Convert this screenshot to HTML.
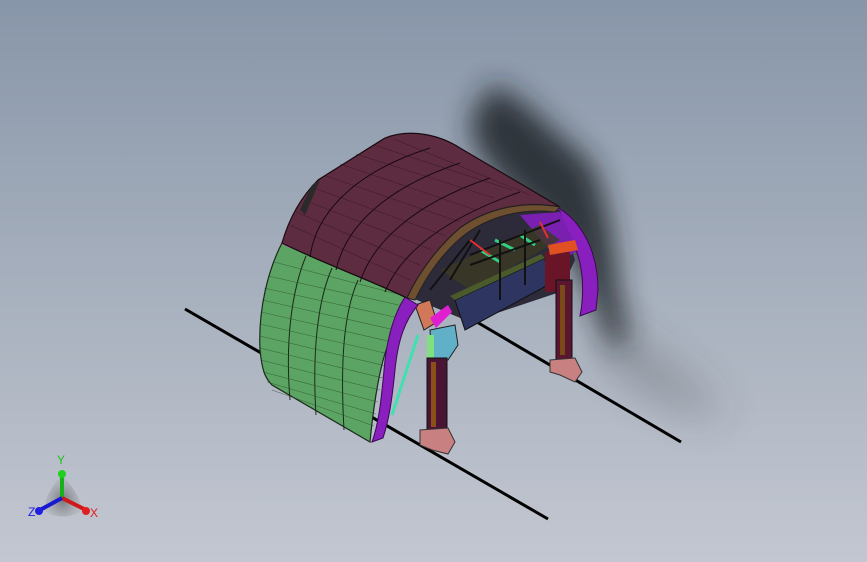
<!DOCTYPE html>
<html><head><meta charset="utf-8"><style>
html,body{margin:0;padding:0;width:867px;height:562px;overflow:hidden}
body{background:linear-gradient(180deg,#8896a9 0%,#a3adbb 45%,#c3c7d1 100%)}
svg{position:absolute;left:0;top:0}
</style></head><body>
<svg width="867" height="562" viewBox="0 0 867 562" font-family="Liberation Sans, sans-serif">
<defs>
<filter id="b" x="-50%" y="-50%" width="200%" height="200%"><feGaussianBlur stdDeviation="14"/></filter>
<filter id="b2" x="-50%" y="-50%" width="200%" height="200%"><feGaussianBlur stdDeviation="22"/></filter>
<radialGradient id="tg" cx="0.5" cy="0.6" r="0.5"><stop offset="0" stop-color="#444"/><stop offset="1" stop-color="#999" stop-opacity="0.4"/></radialGradient>
</defs>
<!-- shadow -->
<path d="M490 85 C520 90 560 140 590 160 C610 200 615 250 620 300 C630 330 630 345 615 350 C600 330 590 290 560 240 C520 200 470 160 470 120 Z" fill="#1e2126" opacity="0.85" filter="url(#b)"/>
<path d="M600 320 C650 360 700 390 725 415 C700 420 650 390 610 360 Z" fill="#333" opacity="0.4" filter="url(#b2)"/>
<!-- rails -->
<line x1="185" y1="309" x2="548" y2="519" stroke="#000" stroke-width="3"/>
<line x1="470" y1="318" x2="681" y2="442" stroke="#000" stroke-width="3"/>
<!-- right purple ring -->
<path d="M548 203 C580 215 598 250 598 290 L596 310 L580 316 C585 290 585 250 560 225 Z" fill="#8a1fc0" stroke="#3a0a50" stroke-width="1"/>
<!-- interior framework -->
<path d="M412 298 C430 260 460 230 500 215 C520 209 540 208 560 210 L575 260 L560 292 L470 322 Z" fill="#2d2a3a"/>
<path d="M520 215 L560 212 L578 250 L560 262 Z" fill="#7a20b0"/>
<path d="M440 270 L540 225 L560 240 L470 290 Z" fill="#3b3a22" opacity="0.8"/>
<path d="M455 300 L545 258 L548 285 L465 330 Z" fill="#2e3560" stroke="#111" stroke-width="1"/>
<path d="M455 300 L545 258 L541 254 L450 296 Z" fill="#4a5a2a"/>
<rect x="545" y="252" width="25" height="40" fill="#6a1428"/>
<path d="M548 245 L575 240 L578 250 L550 255 Z" fill="#e05020"/>
<path d="M480 250 L500 262 M495 240 L515 250 M520 235 L535 245" stroke="#2fd080" stroke-width="3"/>
<path d="M470 255 L560 220 M470 265 L540 240 M500 240 L500 300 M525 230 L525 285 M450 280 L480 230 M430 290 L470 240" stroke="#111" stroke-width="2"/>
<path d="M470 240 L490 255 M540 222 L548 238" stroke="#e03030" stroke-width="2"/>
<!-- right leg -->
<rect x="556" y="280" width="16" height="80" fill="#5a1530" stroke="#111" stroke-width="1"/>
<rect x="560" y="285" width="5" height="70" fill="#7a4a18"/>
<path d="M550 360 L575 358 L582 372 L575 382 L560 375 L550 372 Z" fill="#c88080" stroke="#333" stroke-width="1"/>
<!-- left leg + column -->
<path d="M430 330 L455 325 L458 345 L448 360 L432 360 Z" fill="#60b0c8" stroke="#222" stroke-width="1"/>
<rect x="427" y="335" width="7" height="25" fill="#80e080"/>
<rect x="427" y="358" width="20" height="72" fill="#4a1535" stroke="#111" stroke-width="1"/>
<rect x="431" y="362" width="5" height="65" fill="#8a5018"/>
<path d="M420 430 L448 428 L455 442 L448 454 L432 450 L420 445 Z" fill="#c88080" stroke="#333" stroke-width="1"/>
<path d="M415 305 L430 300 L437 322 L424 330 Z" fill="#d07858" stroke="#222" stroke-width="1"/>
<path d="M430 318 L448 305 L452 312 L436 328 Z" fill="#e020d0"/>
<line x1="418" y1="335" x2="392" y2="415" stroke="#40e0b0" stroke-width="3"/>
<!-- green shell -->
<path d="M282 243 C268 270 258 310 260 350 C262 370 265 378 272 385 L370 442 C372 420 378 370 388 345 C394 325 400 310 407 298 C370 280 320 262 282 243 Z" fill="#5ca464" stroke="#1a2a1a" stroke-width="1.2"/>
<g stroke="#1a2a1a" stroke-width="1" fill="none">
<path d="M306 256 C292 290 285 340 290 400"/>
<path d="M332 268 C318 300 312 350 316 415"/>
<path d="M358 280 C344 312 340 360 344 430"/>
</g>
<g stroke="#2a4a2a" stroke-width="0.6" opacity="0.7">
<path d="M262 300 L395 330 M261 312 L392 342 M260 324 L389 354 M260 336 L386 366 M260 348 L383 378 M261 360 L380 390 M263 372 L378 402 M267 382 L376 414 M272 390 L374 426 M264 288 L399 318 M268 276 L403 306 M274 262 L405 296"/>
</g>
<!-- front purple ring -->
<path d="M405 297 C395 312 388 335 385 360 C382 390 380 420 372 442 L383 438 C389 420 392 400 395 370 C398 340 405 320 418 305 Z" fill="#8a1fc0" stroke="#3a0a50" stroke-width="1"/>
<path d="M288 228 L295 232 L290 248 L282 244 Z" fill="#e030e0"/>
<!-- brown roof -->
<path d="M282 243 C290 215 303 195 318 180 L385 138 C410 128 440 135 460 148 L560 207 C520 200 485 210 460 228 C440 245 420 270 407 298 C370 280 320 262 282 243 Z" fill="#5e2c40" stroke="#1a0a10" stroke-width="1.2"/>
<path d="M560 207 C520 200 485 210 460 228 C440 245 420 270 407 298 L415 300 C428 272 447 248 467 233 C490 217 520 208 555 212 Z" fill="#6e5030" stroke="#222" stroke-width="1"/>
<g stroke="#1a0a10" stroke-width="1" fill="none">
<path d="M310 257 C315 220 345 175 430 148"/>
<path d="M336 270 C345 230 380 190 460 163"/>
<path d="M360 282 C372 245 410 205 490 178"/>
<path d="M385 292 C400 255 440 220 520 192"/>
</g>
<g stroke="#2a1018" stroke-width="0.6" opacity="0.6">
<path d="M290 225 L410 280 M296 212 L420 265 M304 200 L432 250 M314 188 L446 236 M326 176 L460 222 M340 164 L476 210 M356 154 L494 198 M374 145 L512 190 M394 139 L530 195"/>
</g>
<path d="M320 180 L312 185 L300 210 L305 215 Z" fill="#2a2a2a"/>
<!-- triad -->
<path d="M62 475 C48 490 42 505 46 512 C56 518 70 518 80 512 C84 505 76 490 62 475 Z" fill="url(#tg)" opacity="0.6"/>
<line x1="62" y1="498" x2="62" y2="476" stroke="#18b018" stroke-width="4"/>
<circle cx="62" cy="474" r="4" fill="#20d020"/>
<line x1="62" y1="498" x2="86" y2="510" stroke="#d01818" stroke-width="4"/>
<circle cx="86" cy="511" r="4" fill="#e02020"/>
<line x1="62" y1="498" x2="40" y2="510" stroke="#1818d0" stroke-width="4"/>
<circle cx="39" cy="511" r="4" fill="#2020e0"/>
<text x="57" y="464" font-size="12" fill="#20c020">Y</text>
<text x="90" y="517" font-size="12" fill="#e02020">X</text>
<text x="28" y="516" font-size="12" fill="#2020e0">Z</text>
</svg>
</body></html>
